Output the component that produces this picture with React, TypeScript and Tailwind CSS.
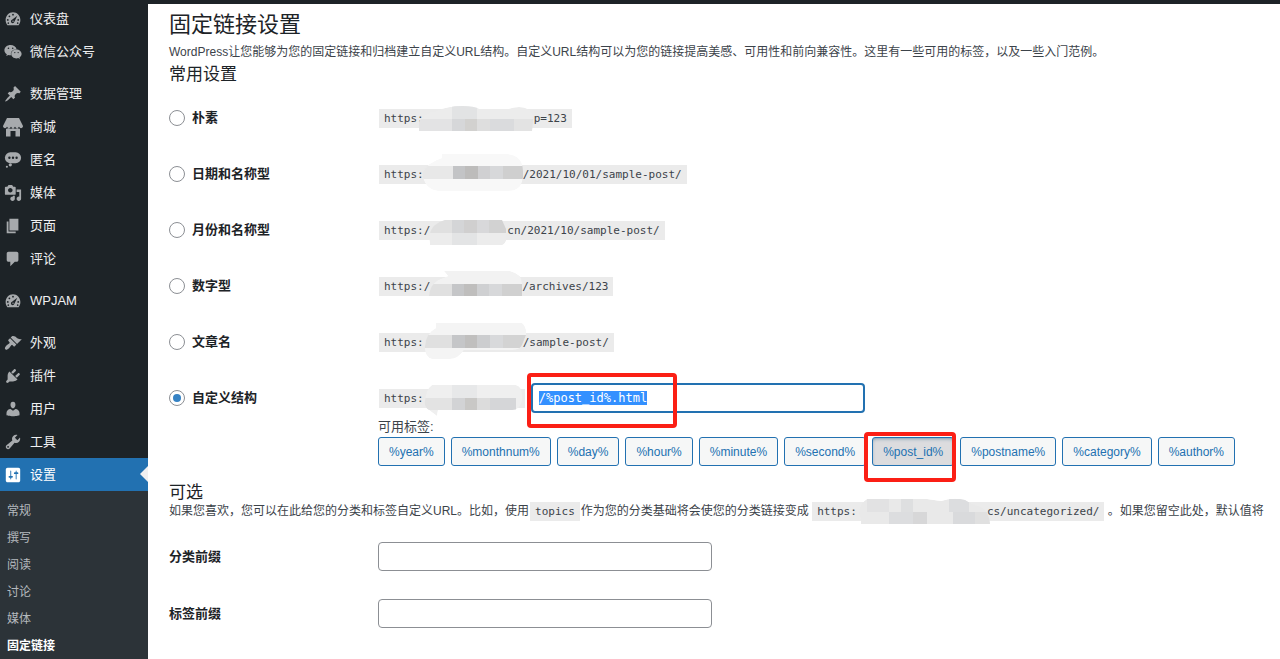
import { useEffect, useRef } from "react";
import { FaWeixin } from "react-icons/fa";

type IconProps = { className?: string };

function Dashicon({ d, className }: IconProps & { d: string }) {
  return (
    <svg viewBox="0 0 20 20" className={className} fill="currentColor" aria-hidden="true">
      <path fillRule="evenodd" d={d} />
    </svg>
  );
}

const paths = {
  pin: "M10.44 3.02l1.82-1.82 6.36 6.35-1.83 1.82c-1.05-.68-2.48-.57-3.41.36l-.75.75c-.92.93-1.04 2.35-.35 3.41l-1.83 1.82-2.41-2.41-2.8 2.79c-.42.42-3.38 2.71-3.8 2.29s1.86-3.39 2.28-3.81l2.79-2.79L4.1 9.36l1.83-1.82c1.05.69 2.48.57 3.4-.36l.75-.75c.93-.92 1.05-2.35.36-3.41z",
  media:
    "M13 11V4c0-.55-.45-1-1-1h-1.67L9 1H5L3.67 3H2c-.55 0-1 .45-1 1v7c0 .55.45 1 1 1h10c.55 0 1-.45 1-1zM7 4.5c1.38 0 2.5 1.12 2.5 2.5S8.38 9.5 7 9.5 4.5 8.38 4.5 7 5.62 4.5 7 4.5zM14 6h5v10.5c0 1.38-1.12 2.5-2.5 2.5S14 17.88 14 16.5s1.12-2.5 2.5-2.5c.17 0 .34.02.5.05V9h-3V6zm-4 8.05V13h2v3.5c0 1.38-1.12 2.5-2.5 2.5S7 17.88 7 16.5 8.12 14 9.5 14c.17 0 .34.02.5.05z",
  page: "M6 15V2h10v13H6zm-1 1h8v2H3V5h2v11z",
  comment:
    "M5 2h9c1.1 0 2 .9 2 2v7c0 1.1-.9 2-2 2h-2l-5 5v-5H5c-1.1 0-2-.9-2-2V4c0-1.1.9-2 2-2z",
  brush:
    "M14.48 11.06L7.41 3.99l1.5-1.5c.5-.56 2.3-.47 3.51.32 1.21.8 1.43 1.28 2.91 2.1 1.18.64 2.45 1.26 4.45.85zm-.71.71L6.7 4.7 4.93 6.47c-.39.39-.39 1.02 0 1.41l1.06 1.06c.39.39.39 1.03 0 1.42-.6.6-1.43 1.11-2.21 1.69-.35.26-.7.53-1.01.84C1.43 14.23.4 16.08 1.4 17.07c.99 1 2.84-.03 4.18-1.36.31-.31.58-.66.85-1.02.57-.78 1.08-1.61 1.69-2.21.39-.39 1.02-.39 1.41 0l1.06 1.06c.39.39 1.02.39 1.41 0z",
  plug: "M13.11 4.36L9.87 7.6 8 5.73l3.24-3.24c.35-.34 1.05-.2 1.56.32.52.51.66 1.21.31 1.55zm-8 1.77l.91-1.12 9.01 9.01-1.19.84c-.71.71-2.63 1.16-3.82 1.16H6.14L4.9 17.26c-.59.59-1.54.59-2.12 0-.59-.58-.59-1.53 0-2.12l1.24-1.24v-3.88c0-1.13.4-3.19 1.09-3.89zm7.26 3.97l3.24-3.24c.34-.35 1.04-.21 1.55.31.52.51.66 1.21.31 1.55l-3.24 3.25z",
  user: "M10 9.25c-2.27 0-2.73-3.44-2.73-3.44C7 4.02 7.82 2 9.97 2c2.16 0 2.98 2.02 2.71 3.81 0 0-.41 3.44-2.68 3.44zm0 2.57L12.72 10c2.39 0 4.52 2.33 4.52 4.53v2.49s-3.65 1.13-7.24 1.13c-3.65 0-7.24-1.13-7.24-1.13v-2.49c0-2.25 1.94-4.48 4.47-4.48z",
  wrench:
    "M16.68 9.77c-1.34 1.34-3.3 1.67-4.95.99l-5.41 6.52c-.99.99-2.59.99-3.58 0s-.99-2.59 0-3.57l6.52-5.42c-.68-1.65-.35-3.61.99-4.95 1.28-1.28 3.12-1.62 4.72-1.06l-2.89 2.89 2.82 2.82 2.86-2.87c.53 1.58.18 3.39-1.08 4.65zM3.81 16.21c.4.39 1.04.39 1.43 0 .4-.4.4-1.04 0-1.43-.39-.4-1.03-.4-1.43 0-.39.39-.39 1.03 0 1.43z",
  settings:
    "M18 16V4c0-1.1-.9-2-2-2H4c-1.1 0-2 .9-2 2v12c0 1.1.9 2 2 2h12c1.1 0 2-.9 2-2zM8 11h1c.55 0 1 .45 1 1s-.45 1-1 1H8v1.5c0 .28-.22.5-.5.5s-.5-.22-.5-.5V13H6c-.55 0-1-.45-1-1s.45-1 1-1h1V5.5c0-.28.22-.5.5-.5s.5.22.5.5V11zm5-2h-1c-.55 0-1-.45-1-1s.45-1 1-1h1V5.5c0-.28.22-.5.5-.5s.5.22.5.5V7h1c.55 0 1 .45 1 1s-.45 1-1 1h-1v5.5c0 .28-.22.5-.5.5s-.5-.22-.5-.5V9z",
};

function GaugeIcon({ className }: IconProps) {
  return (
    <svg viewBox="0 0 20 20" className={className} aria-hidden="true">
      <path
        fill="currentColor"
        d="M3.8 17h12.4c1.3-1.6 2-3.5 2-5.8C18.2 6.4 14.5 2.6 10 2.6S1.8 6.4 1.8 11.2c0 2.3.7 4.2 2 5.8z"
      />
      <g fill="#1d2327">
        <circle cx="10" cy="5.2" r="1" />
        <circle cx="6" cy="7" r="1" />
        <circle cx="4.2" cy="11" r="1" />
        <circle cx="15.8" cy="11" r="1" />
        <circle cx="4.8" cy="14.6" r=".9" />
        <circle cx="15.2" cy="14.6" r=".9" />
        <path d="M14.8 6.4l-3.4 6.8a1.9 1.9 0 1 1-2.5-2.3z" />
      </g>
      <circle cx="10" cy="12.5" r=".7" fill="currentColor" />
    </svg>
  );
}

function StoreIcon({ className }: IconProps) {
  return (
    <svg viewBox="0 0 20 20" className={className} fill="currentColor" aria-hidden="true">
      <path d="M4 1h12l4 8c0 1.3-1 2.2-2 2.200S16 10.400 16 9.600c0 .8-1 1.600-2 1.600s-2-.8-2-1.600c0 .8-1 1.600-2 1.600s-2-.8-2-1.600c0 .8-1 1.600-2 1.600s-2-.8-2-1.600c0 .8-1 1.600-2 1.600S0 10.300 0 9z" />
      <path d="M3 11.800c1.200 0 2-.2 2.600-.8.6.6 1.300.8 2.300.8.9 0 1.600-.2 2.100-.8.5.6 1.200.8 2.100.8 1 0 1.700-.2 2.300-.8.6.6 1.400.8 2.600.8V19.500h-4.500V14h-5v5.500H3z" />
    </svg>
  );
}

function ThoughtIcon({ className }: IconProps) {
  return (
    <svg viewBox="0 0 20 20" className={className} aria-hidden="true">
      <g fill="currentColor">
        <rect x="1" y="1.500" width="18" height="12" rx="6" />
        <circle cx="7" cy="15.300" r="1.800" />
        <circle cx="3.200" cy="17.500" r="1.200" />
      </g>
      <g fill="#1d2327">
        <circle cx="6" cy="7.500" r="1.300" />
        <circle cx="10" cy="7.500" r="1.300" />
        <circle cx="14" cy="7.500" r="1.300" />
      </g>
    </svg>
  );
}

const iconClass = "h-[18px] w-[18px]";

const menuGroups = [
  [
    { label: "仪表盘", icon: <GaugeIcon className={iconClass} /> },
    { label: "微信公众号", icon: <FaWeixin className={iconClass} /> },
  ],
  [
    { label: "数据管理", icon: <Dashicon d={paths.pin} className={iconClass} /> },
    { label: "商城", icon: <StoreIcon className="h-5 w-5" /> },
    { label: "匿名", icon: <ThoughtIcon className={iconClass} /> },
    { label: "媒体", icon: <Dashicon d={paths.media} className={iconClass} /> },
    { label: "页面", icon: <Dashicon d={paths.page} className={iconClass} /> },
    { label: "评论", icon: <Dashicon d={paths.comment} className={iconClass} /> },
  ],
  [{ label: "WPJAM", icon: <GaugeIcon className={iconClass} /> }],
  [
    { label: "外观", icon: <Dashicon d={paths.brush} className={iconClass} /> },
    { label: "插件", icon: <Dashicon d={paths.plug} className={iconClass} /> },
    { label: "用户", icon: <Dashicon d={paths.user} className={iconClass} /> },
    { label: "工具", icon: <Dashicon d={paths.wrench} className={iconClass} /> },
    { label: "设置", icon: <Dashicon d={paths.settings} className={iconClass} />, current: true },
  ],
];

const submenu = ["常规", "撰写", "阅读", "讨论", "媒体", "固定链接"];

function Sidebar() {
  return (
    <aside className="flex w-[148px] shrink-0 flex-col bg-[#1d2327] pt-0.5 text-[13px] text-[#f0f0f1]">
      <nav className="flex flex-col gap-[9px]">
        {menuGroups.map((group, index) => (
          <ul key={index}>
            {group.map((item) => {
              const isCurrent = "current" in item;

              return (
                <li key={item.label} className="relative">
                  <a
                    href="#"
                    className={`flex h-[33px] items-center gap-[7px] pl-[3px] ${
                      isCurrent ? "bg-[#2271b1] text-white" : ""
                    }`}
                  >
                    <span
                      className={`grid w-5 place-items-center ${
                        isCurrent ? "text-white" : "text-[#a7aaad]"
                      }`}
                    >
                      {item.icon}
                    </span>
                    {item.label}
                  </a>
                  {isCurrent && (
                    <span className="absolute top-2 right-0 border-y-8 border-r-8 border-y-transparent border-r-[#f0f0f1]" />
                  )}
                </li>
              );
            })}
          </ul>
        ))}
      </nav>
      <ul className="flex-1 bg-[#2c3338] pt-1.5 pb-2 text-[12px]">
        {submenu.map((label) => (
          <li key={label}>
            <a
              href="#"
              className={`flex h-[27px] items-center pl-[7px] ${
                label === "固定链接" ? "font-bold text-white" : "text-[#b4b9be]"
              }`}
            >
              {label}
            </a>
          </li>
        ))}
      </ul>
    </aside>
  );
}

type Block = [x: number, y: number, w: number, h: number, color: string];

type MosaicData = {
  id: string;
  width: string;
  outline: string;
  base: string;
  blocks: Block[];
};

// Coordinates start at the end of the visible "https:" text, at the top of the grey code box.
const mosaics: Record<string, MosaicData> = {
  plain: {
    id: "m-plain",
    width: "w-[110px]",
    outline: "M-5 22V13Q0 4 12 2Q24-3 38-3Q50-3 56 0H84Q96-4 104 0Q110 4 109 13L108 22z",
    base: "#ececec",
    blocks: [
      [28, -4, 25, 14, "#e2e3e4"],
      [-6, 10, 34, 12, "#e3e3e4"],
      [28, 10, 13, 12, "#d6d7d9"],
      [41, 10, 12, 12, "#d2d1cf"],
      [53, 10, 13, 12, "#dedede"],
      [66, 10, 24, 12, "#dadbdd"],
      [90, 10, 22, 12, "#e3e3e3"],
    ],
  },
  day: {
    id: "m-day",
    width: "w-[99px]",
    outline: "M18-11H84Q99-9 99 6V12Q98 26 84 26H14Q0 24-2 8Q4-3 18-7z",
    base: "#f8f8f8",
    blocks: [
      [-2, 1, 31, 13, "#e8e8e8"],
      [29, 1, 12, 13, "#c3c4c6"],
      [41, 1, 13, 13, "#bdbcbb"],
      [54, 1, 12, 13, "#d0d0d2"],
      [66, 1, 13, 13, "#d7d8da"],
      [79, 1, 20, 13, "#cfcfcf"],
    ],
  },
  month: {
    id: "m-month",
    width: "w-[77px]",
    outline: "M15-1H72L76 8V20Q74 24 72 24H0L-1 15Q2 2 15-1z",
    base: "#ececec",
    blocks: [
      [-2, -2, 24, 14, "#e0e0e0"],
      [22, -2, 12, 14, "#d4d5d7"],
      [34, -2, 13, 14, "#d0cfcf"],
      [47, -2, 12, 14, "#d8d8da"],
      [59, -2, 18, 14, "#d2d2d2"],
      [22, 12, 25, 13, "#e3e4e5"],
    ],
  },
  numeric: {
    id: "m-numeric",
    width: "w-[92px]",
    outline: "M14-6H80Q92-3 92 6V19H-1Q0 8 8 3L18-1z",
    base: "#f2f2f2",
    blocks: [
      [-2, 7, 24, 13, "#e0e0e0"],
      [22, 7, 12, 13, "#c5c6c8"],
      [34, 7, 13, 13, "#bfbebd"],
      [47, 7, 12, 13, "#cfd0d2"],
      [59, 7, 13, 13, "#d7d8da"],
      [72, 7, 21, 13, "#d0d0d0"],
    ],
  },
  name: {
    id: "m-name",
    width: "w-[99px]",
    outline: "M12-10H98Q103-6 102 2L98 12Q96 17 88 17H40Q34 26 26 26H8Q0 24 1 13Q2 0 12-5z",
    base: "#f4f4f4",
    blocks: [
      [0, 2, 28, 13, "#e0e0e0"],
      [28, 2, 13, 13, "#c5c6c8"],
      [41, 2, 12, 13, "#c0bfbe"],
      [53, 2, 13, 13, "#cccdcf"],
      [66, 2, 13, 13, "#d8d9db"],
      [79, 2, 24, 13, "#d3d3d3"],
    ],
  },
  custom: {
    id: "m-custom",
    width: "w-[96px]",
    outline: "M8-4H92Q98-2 98 5V12Q96 21 88 21H14L13 27L5 21Q0 18 1 12Q2 0 8-4z",
    base: "#efefef",
    blocks: [
      [28, -4, 25, 13, "#e7e8e9"],
      [0, 9, 28, 12, "#e3e3e3"],
      [28, 9, 13, 12, "#d2d3d5"],
      [41, 9, 12, 12, "#c9c8c6"],
      [53, 9, 13, 12, "#dcdcdc"],
      [66, 9, 26, 12, "#d5d6d8"],
    ],
  },
  category: {
    id: "m-category",
    width: "w-[130px]",
    outline: "M10-3H70L84-1Q96-5 108-2Q114 2 124 5Q132 9 133 22H4Q4 16 2 12Q2 2 10-3z",
    base: "#e9e9e9",
    blocks: [
      [10, -3, 22, 13, "#e2e2e3"],
      [44, -3, 12, 13, "#dedfe0"],
      [92, -3, 20, 13, "#dcdddf"],
      [32, 10, 24, 12, "#dcdddf"],
      [56, 10, 14, 12, "#d7d7d8"],
      [96, 10, 22, 12, "#d9dadc"],
      [118, 10, 18, 12, "#e0e0e0"],
    ],
  },
};

function Mosaic({ data }: { data: MosaicData }) {
  return (
    <span className={`relative inline-block h-[19px] align-top ${data.width}`}>
      <svg className="absolute top-0 left-0 h-[19px] w-full overflow-visible" aria-hidden="true">
        <clipPath id={data.id}>
          <path d={data.outline} />
        </clipPath>
        <g clipPath={`url(#${data.id})`}>
          <path d={data.outline} fill={data.base} />
          {data.blocks.map(([x, y, w, h, color], index) => (
            <rect key={index} x={x} y={y} width={w} height={h} fill={color} />
          ))}
        </g>
      </svg>
    </span>
  );
}

function UrlCode({ start, end, mosaic }: { start: string; end?: string; mosaic: MosaicData }) {
  return (
    <code className="inline-block h-[19px] bg-[#ebebeb] px-[5px] font-['DejaVu_Sans_Mono',monospace] text-[11px] leading-[19px] whitespace-nowrap text-[#3c434a]">
      {start}
      <Mosaic data={mosaic} />
      {end}
    </code>
  );
}

const structures = [
  { id: "plain", label: "朴素", start: "https:", end: "p=123" },
  { id: "day", label: "日期和名称型", start: "https:", end: "/2021/10/01/sample-post/" },
  { id: "month", label: "月份和名称型", start: "https:/", end: "cn/2021/10/sample-post/" },
  { id: "numeric", label: "数字型", start: "https:/", end: "/archives/123" },
  { id: "name", label: "文章名", start: "https:", end: "/sample-post/" },
];

const tags = [
  "%year%",
  "%monthnum%",
  "%day%",
  "%hour%",
  "%minute%",
  "%second%",
  "%post_id%",
  "%postname%",
  "%category%",
  "%author%",
];

function StructureRadio({ id, label, checked }: { id: string; label: string; checked?: boolean }) {
  return (
    <label className="flex w-[210px] shrink-0 items-center gap-[7px] text-[13px] font-bold text-[#1d2327]">
      <input
        type="radio"
        name="structure"
        value={id}
        defaultChecked={checked}
        className="grid h-4 w-4 appearance-none place-items-center rounded-full border border-[#8c8f94] bg-white before:h-2 before:w-2 before:rounded-full checked:before:bg-[#3582c4]"
      />
      {label}
    </label>
  );
}

function PrefixField({ id, label }: { id: string; label: string }) {
  return (
    <div className="flex h-[57px] items-center">
      <label htmlFor={id} className="w-[209px] shrink-0 text-[13px] font-bold text-[#1d2327]">
        {label}
      </label>
      <input
        id={id}
        type="text"
        className="h-[29px] w-[334px] rounded border border-[#8c8f94] bg-white px-2"
      />
    </div>
  );
}

export default function App() {
  const structureRef = useRef<HTMLInputElement>(null);

  useEffect(() => {
    structureRef.current?.focus({ preventScroll: true });
    structureRef.current?.select();
  }, []);

  return (
    <div className="flex min-h-screen overflow-hidden bg-white font-['Liberation_Sans','Noto_Sans_CJK_SC',sans-serif] text-[#3c434a]">
      <Sidebar />
      <main className="min-w-0 flex-1 overflow-hidden border-t-4 border-[#1d2327] pt-[7px] pl-[21px]">
        <h1 className="text-[22px] leading-7 text-[#1d2327]">固定链接设置</h1>
        <p className="mt-1 text-[12px] leading-[18px] whitespace-nowrap">
          WordPress让您能够为您的固定链接和归档建立自定义URL结构。自定义URL结构可以为您的链接提高美感、可用性和前向兼容性。这里有一些可用的标签，以及一些入门范例。
        </p>
        <h2 className="mt-1 text-[17px] leading-5 text-[#1d2327]">常用设置</h2>

        <form className="mt-[5px]" onSubmit={(e) => e.preventDefault()}>
          {structures.map((row) => (
            <div key={row.id} className="flex h-14 items-center">
              <StructureRadio id={row.id} label={row.label} />
              <UrlCode start={row.start} end={row.end} mosaic={mosaics[row.id]} />
            </div>
          ))}

          <div className="flex h-14 items-center">
            <StructureRadio id="custom" label="自定义结构" checked />
            <UrlCode start="https:" mosaic={mosaics.custom} />
            <div className="relative ml-1.5">
              <input
                ref={structureRef}
                type="text"
                aria-label="自定义结构"
                defaultValue="/%post_id%.html"
                className="h-[30px] w-[334px] rounded border-2 border-[#2271b1] bg-white px-1.5 font-['DejaVu_Sans_Mono',monospace] text-[12px] outline-none selection:bg-[#3390ff] selection:text-white"
              />
              <span className="pointer-events-none absolute -top-2.5 -left-1 h-[55px] w-[150px] rounded border-4 border-[#fb1f15]" />
            </div>
          </div>

          <div className="-mt-2 pl-[209px]">
            <p className="text-[13px] leading-[18px]">可用标签:</p>
            <ul className="mt-px flex gap-1.5">
              {tags.map((tag) => (
                <li key={tag} className="relative">
                  <button
                    type="button"
                    className={`h-[29px] rounded-[3px] border border-[#2271b1] px-[10px] text-[12px] text-[#2271b1] ${
                      tag === "%post_id%"
                        ? "bg-[#dcdcde] shadow-[inset_0_2px_5px_-3px_#0a4b78]"
                        : "bg-[#f6f7f7]"
                    }`}
                  >
                    {tag}
                  </button>
                  {tag === "%post_id%" && (
                    <span className="pointer-events-none absolute -top-[5px] -right-0.5 -left-2 h-[50px] rounded border-4 border-[#fb1f15]" />
                  )}
                </li>
              ))}
            </ul>
          </div>

          <h2 className="mt-[18px] text-[17px] leading-[18px] text-[#1d2327]">可选</h2>
          <p className="h-[19px] text-[12px] leading-[19px] whitespace-nowrap">
            如果您喜欢，您可以在此给您的分类和标签自定义URL。比如，使用
            <code className="mx-px inline-block h-[19px] bg-[#ebebeb] px-[5px] font-['DejaVu_Sans_Mono',monospace] text-[11px] leading-[19px]">
              topics
            </code>
            作为您的分类基础将会使您的分类链接变成{" "}
            <UrlCode start="https:" end="cs/uncategorized/" mosaic={mosaics.category} />{" "}
            。如果您留空此处，默认值将
          </p>

          <div className="mt-[7px]">
            <PrefixField id="category-base" label="分类前缀" />
            <PrefixField id="tag-base" label="标签前缀" />
          </div>
        </form>
      </main>
    </div>
  );
}
